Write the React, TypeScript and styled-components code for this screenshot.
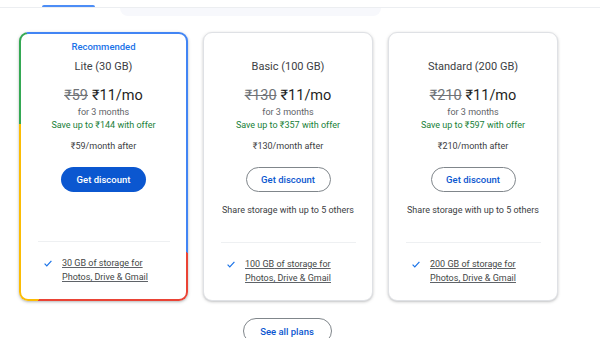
import styled, { createGlobalStyle } from 'styled-components';

const Global = createGlobalStyle`
  body {
    margin: 0;
    background: #fff;
    font-family: Roboto, "Liberation Sans", Arial, sans-serif;
    color: #1f1f1f;
  }
`;

const Page = styled.div`
  width: 600px;
  height: 338px;
  overflow: hidden;
`;

const TabBar = styled.div`
  height: 7px;
  border-bottom: 1px solid #eceef1;
  display: flex;
  align-items: flex-end;
  padding-left: 42px;
`;

const TabIndicator = styled.div`
  width: 53px;
  height: 2px;
  background: #4c8df6;
  border-radius: 2px 2px 0 0;
`;

const SearchTail = styled.div`
  margin-left: 120px;
  width: 261px;
  height: 8px;
  background: #f7f8fc;
  border-radius: 0 0 8px 8px;
`;

const Cards = styled.div`
  display: flex;
  gap: 15px;
  margin-top: 16px;
  padding-left: 19px;
`;

const GradientFrame = styled.div`
  width: 169px;
  height: 269px;
  box-sizing: border-box;
  padding: 2px;
  border-radius: 9px;
  background: conic-gradient(
    from 0deg,
    #4285f4 0deg 136deg,
    #ea4335 136deg 206deg,
    #fbbc04 206deg 297deg,
    #34a853 297deg 330deg,
    #4285f4 330deg 360deg
  );
  box-shadow: 0 1px 2px rgba(60, 64, 67, 0.25), 0 1px 3px 1px rgba(60, 64, 67, 0.1);
`;

const Card = styled.div<{ $plain?: boolean }>`
  box-sizing: border-box;
  width: ${(p) => (p.$plain ? '170px' : '100%')};
  height: ${(p) => (p.$plain ? '269px' : '100%')};
  background: #fff;
  border-radius: ${(p) => (p.$plain ? '9px' : '7px')};
  border: ${(p) => (p.$plain ? '1px solid #dfe1e5' : 'none')};
  box-shadow: ${(p) =>
    p.$plain ? '0 1px 2px rgba(60, 64, 67, 0.22), 0 1px 3px 1px rgba(60, 64, 67, 0.08)' : 'none'};
  display: flex;
  flex-direction: column;
  align-items: center;
  padding-top: ${(p) => (p.$plain ? '7px' : '6px')};
`;

const Badge = styled.div<{ $hidden?: boolean }>`
  height: 14px;
  line-height: 14px;
  font-size: 9.5px;
  font-weight: 500;
  color: #1a73e8;
  visibility: ${(p) => (p.$hidden ? 'hidden' : 'visible')};
`;

const Title = styled.div`
  margin-top: 5px;
  line-height: 16px;
  font-size: 11px;
  color: #3c4043;
`;

const Price = styled.div`
  margin-top: 11px;
  line-height: 20px;
  font-size: 14.5px;
  color: #1f1f1f;
  display: flex;
  gap: 4px;
`;

const OldPrice = styled.span`
  color: #6f7377;
  text-decoration: line-through;
`;

const Period = styled.div`
  line-height: 12px;
  font-size: 9px;
  color: #5f6368;
`;

const Save = styled.div`
  margin-top: 1px;
  line-height: 12px;
  font-size: 9px;
  color: #188038;
`;

const After = styled.div`
  margin-top: 9px;
  line-height: 12px;
  font-size: 9px;
  color: #3c4043;
`;

const Button = styled.button<{ $filled?: boolean }>`
  margin-top: 15px;
  width: 85px;
  height: 25px;
  border-radius: 13px;
  font-family: inherit;
  font-size: 9.5px;
  font-weight: 500;
  cursor: pointer;
  border: ${(p) => (p.$filled ? 'none' : '1px solid #80868b')};
  background: ${(p) => (p.$filled ? '#0b57d0' : '#fff')};
  color: ${(p) => (p.$filled ? '#fff' : '#0b57d0')};
  padding: 0;
`;

const Share = styled.div`
  margin-top: 12px;
  line-height: 12px;
  font-size: 9px;
  color: #3c4043;
`;

const Footer = styled.div`
  margin-top: auto;
  align-self: stretch;
  margin-left: 17px;
  margin-right: 16px;
  border-top: 1px solid #eef0f2;
  padding: 14px 0 15px 6px;
  display: flex;
  gap: 10px;
  align-items: flex-start;
`;

const Check = styled.svg`
  flex: none;
  margin-top: 4px;
`;

const Feature = styled.a`
  font-size: 9px;
  line-height: 14px;
  color: #444746;
  text-decoration: underline;
  text-decoration-color: #5f6368;
`;

const MoreRow = styled.div`
  margin-top: 17px;
  width: 540px;
  display: flex;
  justify-content: center;
  padding-left: 17px;
`;

const MoreButton = styled(Button)`
  margin-top: 0;
  width: 89px;
  height: 26px;
  font-size: 9.5px;
`;

type Plan = {
  name: string;
  old: string;
  save: string;
  after: string;
  storage: string;
  recommended?: boolean;
};

const plans: Plan[] = [
  { name: 'Lite (30 GB)', old: '₹59', save: '₹144', after: '₹59', storage: '30 GB', recommended: true },
  { name: 'Basic (100 GB)', old: '₹130', save: '₹357', after: '₹130', storage: '100 GB' },
  { name: 'Standard (200 GB)', old: '₹210', save: '₹597', after: '₹210', storage: '200 GB' },
];

function PlanBody({ plan }: { plan: Plan }) {
  return (
    <>
      <Badge $hidden={!plan.recommended}>Recommended</Badge>
      <Title>{plan.name}</Title>
      <Price>
        <OldPrice>{plan.old}</OldPrice>
        <span>₹11/mo</span>
      </Price>
      <Period>for 3 months</Period>
      <Save>Save up to {plan.save} with offer</Save>
      <After>{plan.after}/month after</After>
      <Button $filled={plan.recommended}>Get discount</Button>
      {!plan.recommended && <Share>Share storage with up to 5 others</Share>}
      <Footer>
        <Check width="8" height="7" viewBox="0 0 8 7">
          <polyline points="0.6,3.6 2.8,5.8 7.4,0.9" fill="none" stroke="#1a73e8" strokeWidth="1.2" />
        </Check>
        <Feature>
          {plan.storage} of storage for
          <br />
          Photos, Drive &amp; Gmail
        </Feature>
      </Footer>
    </>
  );
}

export default function App() {
  return (
    <Page>
      <Global />
      <TabBar>
        <TabIndicator />
      </TabBar>
      <SearchTail />
      <Cards>
        {plans.map((plan) =>
          plan.recommended ? (
            <GradientFrame key={plan.name}>
              <Card>
                <PlanBody plan={plan} />
              </Card>
            </GradientFrame>
          ) : (
            <Card $plain key={plan.name}>
              <PlanBody plan={plan} />
            </Card>
          )
        )}
      </Cards>
      <MoreRow>
        <MoreButton>See all plans</MoreButton>
      </MoreRow>
    </Page>
  );
}
